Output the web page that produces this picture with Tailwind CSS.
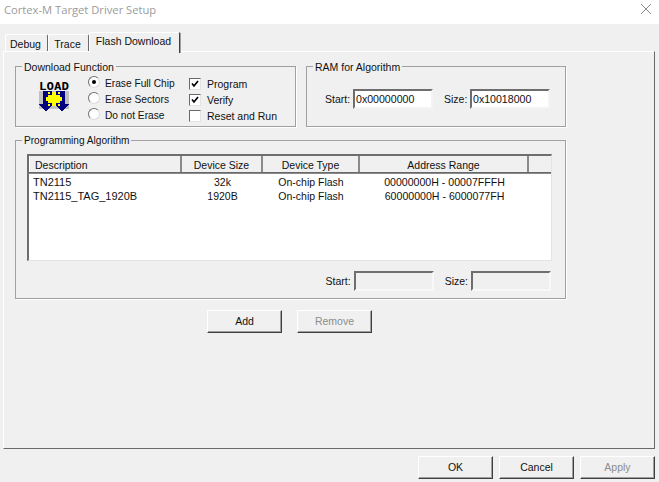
<!DOCTYPE html>
<html lang="en">
<head>
  <meta charset="UTF-8">
  <title>Cortex-M Target Driver Setup</title>
  <script src="https://cdn.jsdelivr.net/npm/@tailwindcss/browser@4"></script>
</head>
<body class="bg-[#f0f0f0] font-['Liberation_Sans',Arial,sans-serif] text-[10.5px] leading-none text-[#111] overflow-hidden">
<div class="w-[659px] h-[482px] flex flex-col">

  <!-- Title bar -->
  <header class="h-6 bg-white flex items-center justify-between pl-1 pr-2 pb-1 shrink-0">
    <span class="font-['Open_Sans',sans-serif] text-[11.2px] text-[#9b9b9b]">Cortex-M Target Driver Setup</span>
    <svg class="w-[10px] h-[10px] mb-[2px]" viewBox="0 0 10 10" fill="none" stroke="#8a8a8a"><path d="M0 0L10 10M10 0L0 10"/></svg>
  </header>

  <!-- Tabs -->
  <div class="h-5 mt-2 ml-[5px] flex items-end shrink-0">
    <div class="w-[43px] h-[18px] pt-[4px] pr-[2px] text-center bg-[#f0f0f0] border-t border-l border-white border-r border-r-[#696969] rounded-t-[2px]">Debug</div>
    <div class="w-[41px] h-[18px] pt-[4px] pr-[2px] text-center bg-[#f0f0f0] border-t border-l border-white border-r border-r-[#696969] rounded-t-[2px]">Trace</div>
    <div class="relative z-10 w-[91px] h-[21px] -mb-px pt-[3px] pr-[2px] text-center bg-[#f0f0f0] border-t border-l border-white border-r border-r-[#404040] shadow-[1px_0_0_#a0a0a0] rounded-t-[2px]">Flash Download</div>
  </div>

  <!-- Tab page -->
  <main class="ml-[3px] -mt-px w-[652px] h-[398px] shrink-0 border border-t-white border-l-white border-r-[#696969] border-b-[#696969] pt-[14px] pl-[11px]">
    <div class="flex gap-[10px]">
      <!-- Download Function -->
      <section class="relative w-[281px] h-[61px] border border-[#a0a0a0] shadow-[1px_1px_0_#fff]">
        <span class="absolute left-[6px] -top-[5px] bg-[#f0f0f0] px-[2px]">Download Function</span>
        <div class="flex pt-2 pl-[23px]">
          <svg class="w-[30px] h-[31px] mt-[6px]" viewBox="0 0 30 31" shape-rendering="crispEdges">
            <rect y="10" width="30" height="18" fill="#c0c0c0"/>
            <text x="15" y="9" text-anchor="middle" font-family="'DejaVu Sans Mono', monospace" font-weight="700" font-size="11" textLength="30" lengthAdjust="spacingAndGlyphs" fill="#000">LOAD</text>
            <path d="M4 10h9v13h1l-7 8l-7-8h4z" fill="#000080"/>
            <path d="M17 10h9v13h4l-7 8l-7-8h1z" fill="#000080"/>
            <path d="M13 11h4v3h4v2h2v4h-2v2h-4v3h-4v-3h-4v-2h-2v-4h2v-2h4z" fill="#ffff00"/>
            <path d="M9 11h2v2h-2zM19 11h2v2h-2zM9 23h2v2h-2zM19 23h2v2h-2z" fill="#ffff00"/>
          </svg>
          <!-- Radios -->
          <div class="ml-[19px] w-[101px] text-[10.2px]">
            <label class="h-4 pt-[2px] flex items-center gap-[5px]">
              <span class="w-3 h-3 mb-1 rounded-full bg-white border border-t-[#707070] border-l-[#707070] border-r-[#dcdcdc] border-b-[#dcdcdc] flex items-center justify-center"><span class="w-1 h-1 rounded-full bg-black"></span></span>
              Erase Full Chip
            </label>
            <label class="h-4 pt-[2px] flex items-center gap-[5px]">
              <span class="w-3 h-3 mb-1 rounded-full bg-white border border-t-[#707070] border-l-[#707070] border-r-[#dcdcdc] border-b-[#dcdcdc]"></span>
              Erase Sectors
            </label>
            <label class="h-4 pt-[2px] flex items-center gap-[5px]">
              <span class="w-3 h-3 mb-1 rounded-full bg-white border border-t-[#707070] border-l-[#707070] border-r-[#dcdcdc] border-b-[#dcdcdc]"></span>
              Do not Erase
            </label>
          </div>
          <!-- Checkboxes -->
          <div class="mt-px">
            <label class="h-4 flex items-center gap-[6px]">
              <span class="w-3 h-3 bg-white border border-t-[#696969] border-l-[#696969] border-r-[#e3e3e3] border-b-[#e3e3e3]">
                <svg class="w-[10px] h-[10px]" viewBox="0 0 10 10" fill="none" stroke="#000" stroke-width="1.7"><path d="M2 4.5L4 7L8 2"/></svg>
              </span>
              Program
            </label>
            <label class="h-4 flex items-center gap-[6px]">
              <span class="w-3 h-3 bg-white border border-t-[#696969] border-l-[#696969] border-r-[#e3e3e3] border-b-[#e3e3e3]">
                <svg class="w-[10px] h-[10px]" viewBox="0 0 10 10" fill="none" stroke="#000" stroke-width="1.7"><path d="M2 4.5L4 7L8 2"/></svg>
              </span>
              Verify
            </label>
            <label class="h-4 flex items-center gap-[6px]">
              <span class="w-3 h-3 bg-white border border-t-[#696969] border-l-[#696969] border-r-[#e3e3e3] border-b-[#e3e3e3]"></span>
              Reset and Run
            </label>
          </div>
        </div>
      </section>

      <!-- RAM for Algorithm -->
      <section class="relative w-[260px] h-[61px] border border-[#a0a0a0] shadow-[1px_1px_0_#fff]">
        <span class="absolute left-[6px] -top-[5px] bg-[#f0f0f0] px-[2px]">RAM for Algorithm</span>
        <div class="flex items-center pt-[22px] pl-[18px]">
          <span class="w-[28px]">Start:</span>
          <div class="w-[80px] h-[20px] bg-white border-2 border-t-[#6e6e6e] border-l-[#6e6e6e] border-r-[#f4f4f4] border-b-[#f4f4f4] pl-px flex items-center text-[10.6px]">0x00000000</div>
          <span class="ml-[11px] w-[26px]">Size:</span>
          <div class="w-[80px] h-[20px] bg-white border-2 border-t-[#6e6e6e] border-l-[#6e6e6e] border-r-[#f4f4f4] border-b-[#f4f4f4] pl-px flex items-center text-[10.6px]">0x10018000</div>
        </div>
      </section>
    </div>

    <!-- Programming Algorithm -->
    <section class="relative mt-[13px] w-[551px] h-[159px] border border-[#a0a0a0] shadow-[1px_1px_0_#fff] pt-[13px] pl-[11px]">
      <span class="absolute left-[6px] -top-[5px] bg-[#f0f0f0] px-[2px] text-[10.1px]">Programming Algorithm</span>
      <div class="w-[525px] h-[107px] bg-white border border-[#e4e4e4] border-t-[#6e6e6e] border-l-[#6e6e6e] border-t-2 border-l-2">
        <div class="h-[17px] flex bg-[#f0f0f0] border-b border-b-[#696969] text-center shadow-[0_1px_0_#8a8a8a]">
          <div class="w-[153px] pl-[5px] pt-[4px] text-left border-r-2 border-r-[#8a8a8a] border-l border-l-white">Description</div>
          <div class="w-[81px] pt-[4px] border-r-2 border-r-[#8a8a8a]">Device Size</div>
          <div class="w-[97px] pt-[4px] border-r-2 border-r-[#8a8a8a]">Device Type</div>
          <div class="w-[169px] pt-[4px] border-r-2 border-r-[#8a8a8a]">Address Range</div>
          <div class="flex-1"></div>
        </div>
        <div class="pt-[2px]">
          <div class="h-[14px] flex items-center text-center">
            <div class="w-[153px] pl-[4px] text-left text-[11px]">TN2115</div>
            <div class="w-[81px]">32k</div>
            <div class="w-[97px] pr-px">On-chip Flash</div>
            <div class="w-[169px] text-[10.6px]">00000000H - 00007FFFH</div>
          </div>
          <div class="h-[14px] flex items-center text-center">
            <div class="w-[153px] pl-[4px] text-left text-[11px]">TN2115_TAG_1920B</div>
            <div class="w-[81px]">1920B</div>
            <div class="w-[97px] pr-px">On-chip Flash</div>
            <div class="w-[169px] text-[10.6px]">60000000H - 6000077FH</div>
          </div>
        </div>
      </div>
      <div class="flex items-center justify-end mt-[10px] pr-[14px]">
        <span class="mr-[3px]">Start:</span>
        <div class="w-[80px] h-[20px] bg-[#f0f0f0] border-2 border-t-[#6e6e6e] border-l-[#6e6e6e] border-r-[#f8f8f8] border-b-[#f8f8f8]"></div>
        <span class="ml-[11px] mr-[3px]">Size:</span>
        <div class="w-[80px] h-[20px] bg-[#f0f0f0] border-2 border-t-[#6e6e6e] border-l-[#6e6e6e] border-r-[#f8f8f8] border-b-[#f8f8f8]"></div>
      </div>
    </section>

    <!-- Add / Remove -->
    <div class="flex gap-[15px] mt-[11px] ml-[192px]">
      <button class="w-[75px] h-[23px] bg-[#f0f0f0] border border-t-white border-l-white border-r-[#404040] border-b-[#404040] shadow-[inset_-1px_-1px_0_#a0a0a0]">Add</button>
      <button class="w-[75px] h-[23px] bg-[#f0f0f0] border border-t-white border-l-white border-r-[#404040] border-b-[#404040] shadow-[inset_-1px_-1px_0_#a0a0a0] text-[#8d8d8d]">Remove</button>
    </div>
  </main>

  <!-- Footer buttons -->
  <footer class="flex justify-end gap-[6px] mt-[7px] pr-1">
    <button class="w-[75px] h-[23px] pb-px bg-[#f0f0f0] border border-t-white border-l-white border-r-[#404040] border-b-[#404040] shadow-[inset_-1px_-1px_0_#a0a0a0]">OK</button>
    <button class="w-[75px] h-[23px] pb-px bg-[#f0f0f0] border border-t-white border-l-white border-r-[#404040] border-b-[#404040] shadow-[inset_-1px_-1px_0_#a0a0a0]">Cancel</button>
    <button class="w-[75px] h-[23px] pb-px bg-[#f0f0f0] border border-t-white border-l-white border-r-[#404040] border-b-[#404040] shadow-[inset_-1px_-1px_0_#a0a0a0] text-[#8d8d8d]">Apply</button>
  </footer>
</div>
</body>
</html>
